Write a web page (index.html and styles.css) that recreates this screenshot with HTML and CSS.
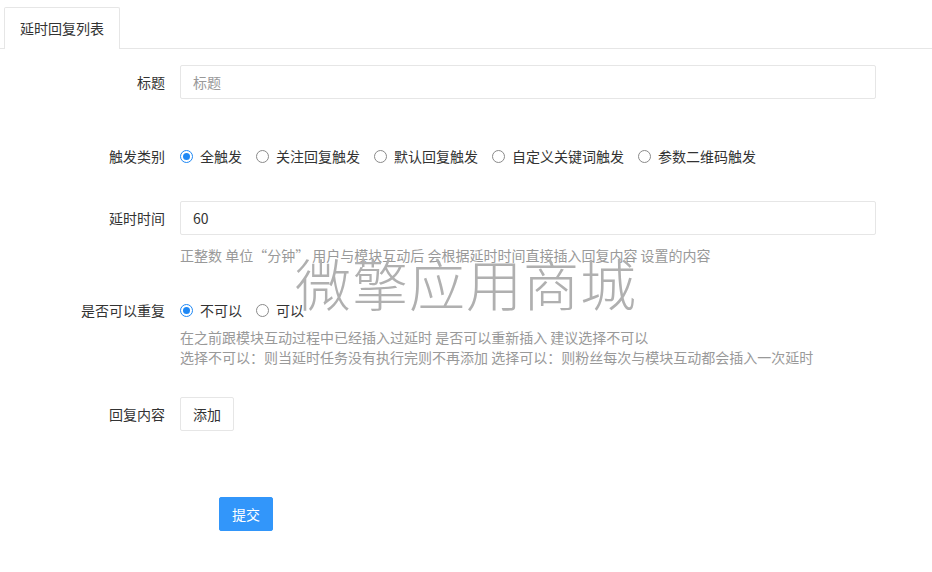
FILE: index.html
```html
<!DOCTYPE html>
<html lang="zh">
<head>
<meta charset="utf-8">
<title>延时回复</title>
<link rel="stylesheet" href="styles.css">
</head>
<body>
<div class="tabs">
  <div class="tab">延时回复列表</div>
</div>
<form class="form">
  <div class="row row-title">
    <label class="label">标题</label>
    <div class="field"><input class="input" type="text" placeholder="标题"></div>
  </div>
  <div class="row row-trigger">
    <label class="label">触发类别</label>
    <div class="field radios">
      <span class="radio checked"><i></i>全触发</span>
      <span class="radio"><i></i>关注回复触发</span>
      <span class="radio"><i></i>默认回复触发</span>
      <span class="radio"><i></i>自定义关键词触发</span>
      <span class="radio"><i></i>参数二维码触发</span>
    </div>
  </div>
  <div class="row row-delay">
    <label class="label">延时时间</label>
    <div class="field"><input class="input value" type="text" value="60"></div>
  </div>
  <div class="help help-delay">正整数 单位“分钟” 用户与模块互动后 会根据延时时间直接插入回复内容 设置的内容</div>
  <div class="row row-repeat">
    <label class="label">是否可以重复</label>
    <div class="field radios">
      <span class="radio checked"><i></i>不可以</span>
      <span class="radio"><i></i>可以</span>
    </div>
  </div>
  <div class="help help-repeat">在之前跟模块互动过程中已经插入过延时 是否可以重新插入 建议选择不可以<br>选择不可以：则当延时任务没有执行完则不再添加 选择可以：则粉丝每次与模块互动都会插入一次延时</div>
  <div class="row row-reply">
    <label class="label">回复内容</label>
    <div class="field"><span class="btn">添加</span></div>
  </div>
  <div class="submit-row"><span class="btn btn-primary">提交</span></div>
</form>
<div class="watermark">微擎应用商城</div>
</body>
</html>
```
FILE: styles.css
```css
* { box-sizing: border-box; }
html, body { margin: 0; padding: 0; background: #fff; }
body {
  font-family: "Noto Sans CJK SC", "Noto Sans", sans-serif;
  font-size: 14px;
  color: #333;
  height: 572px;
  overflow: hidden;
}
.tabs {
  padding: 7px 0 0 4px;
  border-bottom: 1px solid #e6e6e6;
  display: flex;
}
.tab {
  height: 42px;
  line-height: 40px;
  padding: 0 15px;
  border: 1px solid #e6e6e6;
  border-bottom: none;
  border-radius: 2px 2px 0 0;
  background: #fff;
  margin-bottom: -1px;
  color: #333;
}
.form { padding: 0; }
.row {
  display: flex;
  align-items: center;
  height: 34px;
}
.label {
  width: 180px;
  padding-right: 15px;
  text-align: right;
  flex: none;
}
.field { flex: none; width: 696px; }
.input {
  width: 696px;
  height: 34px;
  border: 1px solid #e6e6e6;
  border-radius: 2px;
  padding: 0 12px;
  font: inherit;
  font-size: 14px;
  color: #333;
  outline: none;
  background: #fff;
}
.input::placeholder { color: #999; }
.row-title { margin-top: 16px; }
.row-trigger { margin-top: 40px; }
.row-delay { margin-top: 28px; }
.help {
  margin-left: 180px;
  color: #999;
  line-height: 20px;
}
.help-delay { margin-top: 10px; }
.row-repeat { margin-top: 28px; }
.help-repeat { margin-top: 0; }
.row-reply { margin-top: 30px; }
.radios { display: flex; align-items: center; }
.radio {
  display: inline-flex;
  align-items: center;
  margin-right: 14px;
  white-space: nowrap;
}
.radio i {
  width: 13px;
  height: 13px;
  border: 1px solid #8a8a8a;
  border-radius: 50%;
  margin-right: 7px;
  position: relative;
  flex: none;
}
.radio.checked i { border-color: #1e88f5; }
.radio.checked i::after {
  content: "";
  position: absolute;
  left: 2px; top: 2px;
  width: 7px; height: 7px;
  border-radius: 50%;
  background: #1e88f5;
}
.btn {
  display: inline-block;
  height: 34px;
  line-height: 32px;
  padding: 0 12px;
  border: 1px solid #e6e6e6;
  border-radius: 2px;
  background: #fff;
  color: #333;
}
.submit-row { margin: 66px 0 0 219px; }
.btn-primary {
  background: #3296fa;
  border-color: #3296fa;
  color: #fff;
}
.watermark {
  position: absolute;
  left: 0; right: 0;
  top: 242px;
  text-align: center;
  font-size: 56px;
  font-weight: 300;
  letter-spacing: 1px;
  color: #b0b0b0;
  pointer-events: none;
  line-height: 80px;
}
```
